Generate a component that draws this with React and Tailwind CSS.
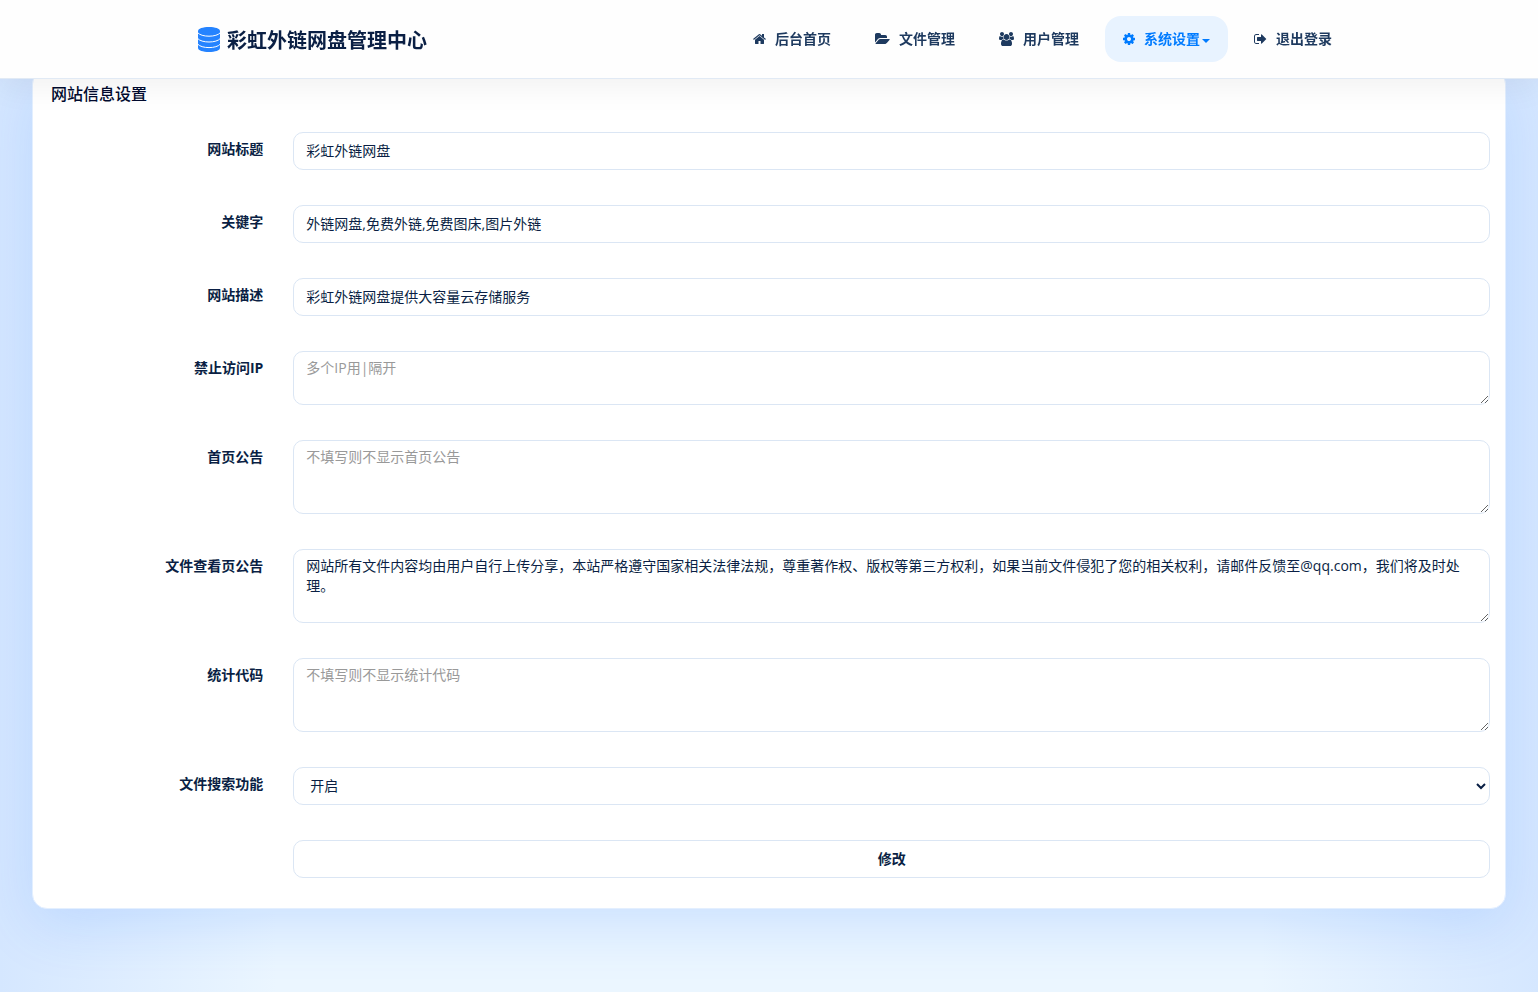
import React from "react";

const icons = {
  home: {
    viewBox: "64 0 1664 1792",
    d: "M1472 992v480q0 26-19 45t-45 19h-384v-384h-256v384h-384q-26 0-45-19t-19-45v-480q0-1 .5-3t.5-3l575-474 575 474q1 2 1 6zm223-69l-62 74q-8 9-21 11h-3q-13 0-21-7l-692-577-692 577q-12 8-24 7-13-2-21-11l-62-74q-8-10-7-23.5t11-21.5l719-599q32-26 76-26t76 26l244 204v-195q0-14 9-23t23-9h192q14 0 23 9t9 23v408l219 182q10 8 11 21.5t-7 23.5z",
  },
  folder: {
    viewBox: "64 0 1920 1792",
    d: "M1943 952q0 31-31 66l-336 396q-43 51-120.5 86.5t-143.5 35.5h-1088q-34 0-60.5-13t-26.5-43q0-31 31-66l336-396q43-51 120.5-86.5t143.5-35.5h1088q34 0 60.5 13t26.5 43zm-343-344v160h-832q-94 0-197 47.5t-164 119.5l-337 396-5 6q0-4-.5-12.5t-.5-12.5v-960q0-92 66-158t158-66h320q92 0 158 66t66 158v32h544q92 0 158 66t66 158z",
  },
  users: {
    viewBox: "64 0 1920 1792",
    d: "M657 896q-162 5-265 128h-134q-82 0-138-40.5t-56-118.5q0-353 124-353 6 0 43.5 21t97.5 42.5 119 21.5q67 0 133-23-5 37-5 66 0 139 81 256zm1071 637q0 120-73 189.5t-194 69.5h-874q-121 0-194-69.5t-73-189.5q0-53 3.5-103.5t14-109 26.5-108.5 43-97.5 62-81 85.5-53.5 111.5-20q10 0 43 21.5t73 48 107 48 135 21.5 135-21.5 107-48 73-48 43-21.5q61 0 111.5 20t85.5 53.5 62 81 43 97.5 26.5 108.5 14 109 3.5 103.5zm-1024-1277q0 106-75 181t-181 75-181-75-75-181 75-181 181-75 181 75 75 181zm704 384q0 159-112.5 271.5t-271.5 112.5-271.5-112.5-112.5-271.5 112.5-271.5 271.5-112.5 271.5 112.5 112.5 271.5zm576 225q0 78-56 118.5t-138 40.5h-134q-103-123-265-128 81-117 81-256 0-29-5-66 66 23 133 23 59 0 119-21.5t97.5-42.5 43.5-21q124 0 124 353zm-128-609q0 106-75 181t-181 75-181-75-75-181 75-181 181-75 181 75 75 181z",
  },
  cog: {
    viewBox: "128 0 1536 1792",
    d: "M1152 896q0-106-75-181t-181-75-181 75-75 181 75 181 181 75 181-75 75-181zm512-109v222q0 12-8 23t-20 13l-185 28q-19 54-39 91 35 50 107 138 10 12 10 25t-9 23q-27 37-99 108t-94 71q-12 0-26-9l-138-108q-44 23-91 38-16 136-29 186-7 28-36 28h-222q-14 0-24.5-8.5t-11.5-21.5l-28-184q-49-16-90-37l-141 107q-10 9-25 9-14 0-25-11-126-114-165-168-7-10-7-23 0-12 8-23 15-21 51-66.5t54-70.5q-27-50-41-99l-183-27q-13-2-21-12.5t-8-23.5v-222q0-12 8-23t19-13l186-28q14-46 39-92-40-57-107-138-10-12-10-24 0-10 9-23 26-36 98.5-107.5t94.5-71.5q13 0 26 10l138 107q44-23 91-38 16-136 29-186 7-28 36-28h222q14 0 24.5 8.5t11.5 21.5l28 184q49 16 90 37l142-107q9-9 24-9 13 0 25 10 129 119 165 170 7 8 7 22 0 12-8 23-15 21-51 66.5t-54 70.5q26 50 41 98l183 28q13 2 21 12.5t8 23.5z",
  },
  signOut: {
    viewBox: "64 0 1664 1792",
    d: "M704 1440q0 4 1 20t.5 26.5-3 23.5-10 19.5-20.5 6.5h-320q-119 0-203.5-84.5t-84.5-203.5v-704q0-119 84.5-203.5t203.5-84.5h320q13 0 22.5 9.5t9.5 22.5q0 4 1 20t.5 26.5-3 23.5-10 19.5-20.5 6.5h-320q-66 0-113 47t-47 113v704q0 66 47 113t113 47h312l11.5 1 11.5 3 8 5.5 7 9 2 13.5zm928-544q0 26-19 45l-544 544q-19 19-45 19t-45-19-19-45v-288h-448q-26 0-45-19t-19-45v-384q0-26 19-45t45-19h448v-288q0-26 19-45t45-19 45 19l544 544q19 19 19 45z",
  },
};

const navItems = [
  { icon: "home", label: "后台首页" },
  { icon: "folder", label: "文件管理" },
  { icon: "users", label: "用户管理" },
  { icon: "cog", label: "系统设置", active: true },
  { icon: "signOut", label: "退出登录" },
];

const fields = [
  { id: "title", label: "网站标题", value: "彩虹外链网盘" },
  { id: "keywords", label: "关键字", value: "外链网盘,免费外链,免费图床,图片外链" },
  { id: "description", label: "网站描述", value: "彩虹外链网盘提供大容量云存储服务" },
  { id: "blackip", label: "禁止访问IP", rows: 2, placeholder: "多个IP用|隔开" },
  { id: "gonggao", label: "首页公告", rows: 3, placeholder: "不填写则不显示首页公告" },
  {
    id: "gg_file",
    label: "文件查看页公告",
    rows: 3,
    value:
      "网站所有文件内容均由用户自行上传分享，本站严格遵守国家相关法律法规，尊重著作权、版权等第三方权利，如果当前文件侵犯了您的相关权利，请邮件反馈至@qq.com，我们将及时处理。",
  },
  { id: "footer", label: "统计代码", rows: 3, placeholder: "不填写则不显示统计代码" },
];

const control =
  "block w-full rounded-[10px] border border-[#dbe6f4] bg-white px-3 text-sm leading-5 text-[#0a1f44] placeholder:text-[#999] outline-none focus:border-[#007bff]";

const Icon = ({ name, className }) => (
  <svg viewBox={icons[name].viewBox} className={className} fill="currentColor" aria-hidden="true">
    <path d={icons[name].d} />
  </svg>
);

/* Stacked disks in front of the site name */
const Logo = () => (
  <svg viewBox="0 0 22 25" className="h-[25px] w-[22px]" aria-hidden="true">
    <path d="M0 4C0 1.6 4.9 0 11 0s11 1.6 11 4v17c0 2.400-4.900 4-11 4S0 23.400 0 21z" fill="#2583ff" />
    <g fill="none" stroke="#fff" strokeWidth="1">
      <path d="M-.5 5.500C1.500 8 6 9.200 11 9.200S20.500 8 22.500 5.500" />
      <path d="M-.5 11.300C1.500 13.800 6 15 11 15s9.500-1.200 11.500-3.700" />
      <path d="M-.5 16.900C1.500 19.400 6 20.600 11 20.600s9.500-1.200 11.500-3.700" />
    </g>
  </svg>
);

const Row = ({ id, label, children }) => (
  <div className="flex">
    <div className="w-1/6 shrink-0 px-[15px] pt-[7px] text-right text-sm leading-5 font-bold">
      {label && <label htmlFor={id}>{label}</label>}
    </div>
    <div className="w-5/6 px-[15px]">{children}</div>
  </div>
);

const Header = () => (
  <header className="fixed inset-x-0 top-0 z-10 border-b border-[#e1eaf5] bg-[#fefefe] shadow-[0_8px_32px_rgba(0,0,0,0.06)]">
    <div className="mx-auto flex max-w-[1170px] items-center justify-between py-4 pr-1 pl-[14px]">
      <a href="#" className="flex items-center gap-[7px] text-xl font-bold text-[#0a1f44]">
        <Logo />
        <span className="pt-1">彩虹外链网盘管理中心</span>
      </a>
      <nav className="flex gap-2">
        {navItems.map((item) => (
          <a
            key={item.label}
            href="#"
            className={`flex h-[46px] items-center rounded-2xl px-[18px] text-sm font-semibold ${
              item.active ? "bg-[#e8f3ff] text-[#007bff]" : "text-[#1e3a5f]"
            }`}
          >
            <Icon name={item.icon} className="mr-[9px] h-[14px] w-auto" />
            {item.label}
            {item.active && (
              <span className="mt-1 ml-[2px] border-x-4 border-t-4 border-x-transparent border-t-current" />
            )}
          </a>
        ))}
      </nav>
    </div>
  </header>
);

export default function App() {
  return (
    <div className="min-h-screen bg-[#ebf6ff] bg-[linear-gradient(to_right,#d5e7ff_0,#ebf6ff_18%,#ebf6ff_82%,#d5e7ff_100%)] font-['Open_Sans','Noto_Sans_CJK_SC',sans-serif] text-[#0a1f44]">
      <Header />
      <main className="px-8 pt-[69px] pb-10">
        <section className="rounded-[15px] border border-[#e3efff] bg-white pt-3 pb-[30px] shadow-[0_16px_60px_rgba(0,100,255,0.14)]">
          <h1 className="mb-[26px] px-[18px] text-base leading-6 font-medium text-[#000a2e]">网站信息设置</h1>
          <form className="flex flex-col gap-[35px]" onSubmit={(e) => e.preventDefault()}>
            {fields.map((field) => (
              <Row key={field.id} id={field.id} label={field.label}>
                {field.rows ? (
                  <textarea
                    id={field.id}
                    rows={field.rows}
                    defaultValue={field.value}
                    placeholder={field.placeholder}
                    className={`${control} resize-y py-1.5`}
                  />
                ) : (
                  <input id={field.id} type="text" defaultValue={field.value} className={`${control} h-[38px] pb-0.5`} />
                )}
              </Row>
            ))}
            <Row id="search" label="文件搜索功能">
              <select id="search" defaultValue="1" className={`${control} h-[38px] pb-0.5`}>
                <option value="1">开启</option>
                <option value="0">关闭</option>
              </select>
            </Row>
            <Row>
              <button type="submit" className={`${control} h-[38px] font-bold`}>
                修改
              </button>
            </Row>
          </form>
        </section>
      </main>
    </div>
  );
}
